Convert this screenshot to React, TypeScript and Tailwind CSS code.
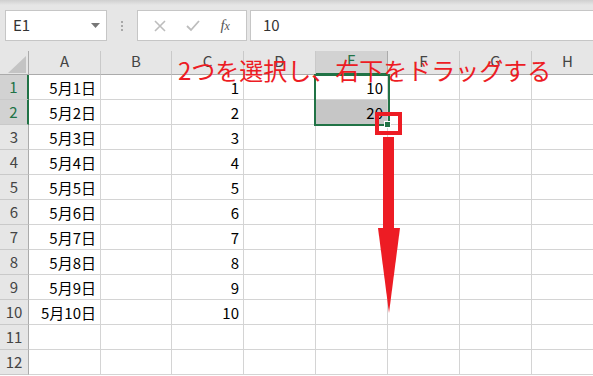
import React from "react";

const cols = [
  { k: "A", w: "w-[72px]" },
  { k: "B", w: "w-[71px]" },
  { k: "C", w: "w-[72px]" },
  { k: "D", w: "w-[72px]" },
  { k: "E", w: "w-[72px]" },
  { k: "F", w: "w-[72px]" },
  { k: "G", w: "w-[72px]" },
  { k: "H", w: "w-[72px]" },
];

const font = { fontFamily: '"Noto Sans CJK JP", "Noto Sans", sans-serif' };

export default function App() {
  const rows = Array.from({ length: 12 }, (_, i) => i + 1);
  return (
    <div
      className="relative w-[593px] h-[376px] overflow-hidden bg-white text-[#222]"
      style={font}
    >
      {/* Formula bar */}
      <div className="h-[51px] bg-[linear-gradient(#cfcfcf,#e6e6e6_5px)] flex items-start pt-[10px] pl-[5px] gap-0">
        <div className="w-[102px] shrink-0 h-[31px] bg-white border border-[#c6c6c6] flex items-center justify-between pl-[7px] pr-[6px]">
          <span className="text-[15px] text-[#333]">E1</span>
          <svg width="9" height="5" viewBox="0 0 9 5">
            <polygon points="0,0 9,0 4.5,5" fill="#777" />
          </svg>
        </div>
        <div className="w-[30px] shrink-0 h-[31px] flex flex-col items-center justify-center gap-[2px]">
          <div className="w-[2px] h-[2px] bg-[#a8a8a8]" />
          <div className="w-[2px] h-[2px] bg-[#a8a8a8]" />
          <div className="w-[2px] h-[2px] bg-[#a8a8a8]" />
        </div>
        <div className="w-[110px] shrink-0 h-[31px] bg-white border border-[#c6c6c6] flex items-center justify-around px-[6px]">
          <svg width="12" height="12" viewBox="0 0 12 12">
            <path d="M1 1 L11 11 M11 1 L1 11" stroke="#bdbdbd" strokeWidth="1.6" />
          </svg>
          <svg width="14" height="12" viewBox="0 0 14 12">
            <path d="M1 6 L5 10 L13 1" stroke="#bdbdbd" strokeWidth="1.8" fill="none" />
          </svg>
          <span
            className="text-[15px] italic text-[#555] leading-none"
            style={{ fontFamily: '"Liberation Serif", serif' }}
          >
            f<span className="text-[12px]">x</span>
          </span>
        </div>
        <div className="ml-[3px] flex-1 h-[31px] bg-white border border-[#c6c6c6] border-r-0 flex items-center pl-[12px]">
          <span className="text-[15px] text-[#333]">10</span>
        </div>
      </div>

      {/* Header row */}
      <div className="flex h-[24px] bg-[#e6e6e6]">
        <div className="w-[29px] shrink-0 h-full border-r border-b border-[#ababab] relative">
          <svg className="absolute left-[8px] top-[5px]" width="18" height="17" viewBox="0 0 18 17">
            <polygon points="18,0 18,17 0,17" fill="#c4c4c4" />
          </svg>
        </div>
        {cols.map((c) => (
          <div
            key={c.k}
            className={`${c.w} shrink-0 h-full flex items-center justify-center text-[15px] pb-[3px] border-r ${
              c.k === "E"
                ? "bg-[#d2d2d2] text-[#217346] border-r-[#ababab] border-b-2 border-b-[#217346]"
                : "text-[#444] border-[#c9c9c9] border-b border-b-[#ababab]"
            }`}
          >
            {c.k}
          </div>
        ))}
      </div>

      {/* Body rows */}
      {rows.map((r) => {
        const sel = r === 1 || r === 2;
        return (
          <div key={r} className="flex h-[25px]">
            <div
              className={`w-[29px] shrink-0 h-full flex items-center justify-center text-[15px] border-b border-[#c9c9c9] ${
                sel
                  ? "bg-[#d2d2d2] text-[#217346] border-r-2 border-r-[#217346]"
                  : "bg-[#e6e6e6] text-[#444] border-r border-r-[#ababab]"
              }`}
            >
              {r}
            </div>
            {cols.map((c) => {
              let content: string = "";
              if (c.k === "A" && r <= 10) content = `5月${r}日`;
              if (c.k === "C" && r <= 10) content = String(r);
              if (c.k === "E" && r === 1) content = "10";
              if (c.k === "E" && r === 2) content = "20";
              const shade = c.k === "E" && r === 2;
              return (
                <div
                  key={c.k}
                  className={`${c.w} shrink-0 h-full border-r border-b border-[#d4d4d4] flex items-center justify-end pr-[4px] pt-[2px] text-[15px] text-black ${
                    shade ? "bg-[#c6c6c6]" : ""
                  }`}
                >
                  {content}
                </div>
              );
            })}
          </div>
        );
      })}

      {/* Selection */}
      <div className="absolute left-[314px] top-[74px] w-[76px] h-[52px] border-2 border-[#217346]" />
      <div className="absolute left-[384px] top-[121px] w-[7px] h-[7px] bg-[#217346] border border-white" />

      {/* Annotation text */}
      <div className="absolute left-[178px] top-[58px] text-[24px] leading-none text-[#ed1c24] whitespace-nowrap">
        2つを選択し、右下をドラッグする
      </div>

      {/* Red box */}
      <div className="absolute left-[375px] top-[112px] w-[27px] h-[23px] border-4 border-[#ed1c24]" />

      {/* Arrow */}
      <svg className="absolute left-[376px] top-[137px]" width="26" height="178" viewBox="0 0 26 178">
        <rect x="7" y="0" width="11" height="92" fill="#ed1c24" />
        <polygon points="2,91 24,91 13,176" fill="#ed1c24" />
      </svg>
    </div>
  );
}
